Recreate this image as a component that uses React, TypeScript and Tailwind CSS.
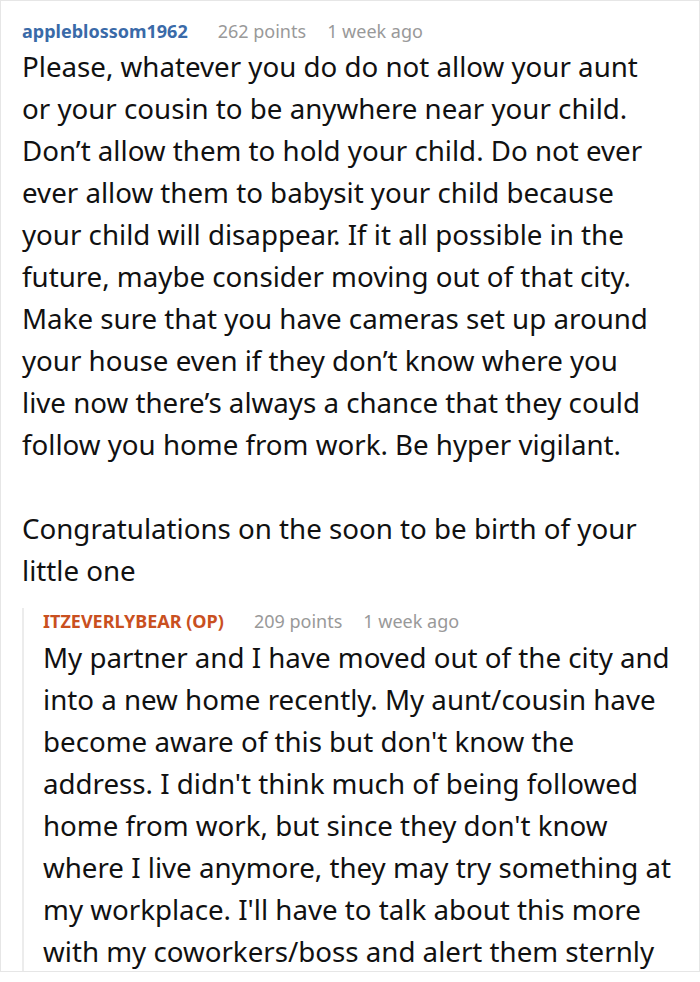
const paragraphs = [
  "Please, whatever you do do not allow your aunt or your cousin to be anywhere near your child. Don’t allow them to hold your child. Do not ever ever allow them to babysit your child because your child will disappear. If it all possible in the future, maybe consider moving out of that city. Make sure that you have cameras set up around your house even if they don’t know where you live now there’s always a chance that they could follow you home from work. Be hyper vigilant.",
  "Congratulations on the soon to be birth of your little one",
];

const reply =
  "My partner and I have moved out of the city and into a new home recently. My aunt/cousin have become aware of this but don't know the address. I didn't think much of being followed home from work, but since they don't know where I live anymore, they may try something at my workplace. I'll have to talk about this more with my coworkers/boss and alert them sternly";

const Meta = ({ points }: { points: string }) => (
  <>
    <span className="ml-[30px]">{points}</span>
    <span className="ml-[21px]">1 week ago</span>
  </>
);

export default function App() {
  return (
    <div
      className="w-[700px] h-[982px] overflow-hidden bg-white"
      style={{ fontFamily: '"Noto Sans", "Open Sans", sans-serif' }}
    >
      <div className="border border-[#e6e6e6] h-[972px] overflow-hidden pl-[21px] pr-[16px] pt-[17px]">
        <div className="flex items-center text-[18px] leading-[26px] text-[#999]">
          <span className="font-bold text-[#3a6aa8]">appleblossom1962</span>
          <Meta points="262 points" />
        </div>
        <div className="mt-[1px] mr-[33px] text-[27.7px] leading-[42px] text-[#111]">
          {paragraphs.map((p, i) => (
            <p key={i} className={i > 0 ? "mt-[42px]" : ""}>
              {p}
            </p>
          ))}
        </div>

        <div className="mt-[17px] border-l-2 border-[#ececec] pl-[19px]">
          <div className="flex items-center text-[18px] leading-[26px] text-[#999]">
            <span className="font-bold text-[#c9501f]">ITZEVERLYBEAR (OP)</span>
            <Meta points="209 points" />
          </div>
          <p className="mt-[2px] text-[27.7px] leading-[42px] text-[#111]">
            {reply}
          </p>
        </div>
      </div>
    </div>
  );
}
